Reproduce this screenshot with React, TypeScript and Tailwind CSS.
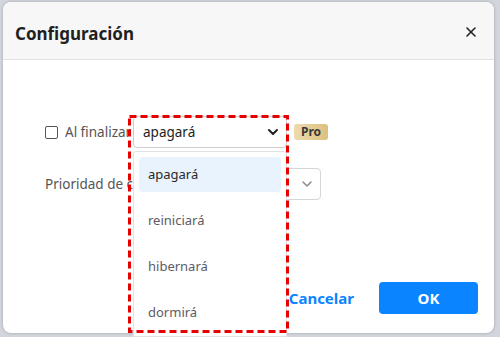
import { ChevronDown, X } from "lucide-react";

const FONT = "font-['Noto_Sans',_'Liberation_Sans',_sans-serif]";

const OPTIONS = ["apagará", "reiniciará", "hibernará", "dormirá"];

const Dropdown = () => (
    <div className="absolute left-0 top-[35px] z-10 w-[154px] h-[186px] bg-white border border-[#e2e2e2] rounded-t-[3px] px-[5px] pt-[5px] flex flex-col gap-[11px]">
        {OPTIONS.map((opt, i) => (
            <div
                key={`opt_${i}`}
                className={`h-[35px] shrink-0 flex items-center px-[9px] rounded-[4px] text-[13px] ${i === 0 ? "bg-[#e8f3fe] text-[#2a2a2a]" : "text-[#5c5c63]"}`}
            >
                {opt}
            </div>
        ))}
    </div>
);

export default function App() {
    return (
        <div className={`w-[500px] h-[337px] bg-[#d2d5db] pt-[2px] pl-[3px] ${FONT}`}>
            <div className="w-[491px] h-[331px] bg-white rounded-[8px] shadow-[0_0_3px_rgba(0,0,0,0.25)] flex flex-col">
                {/* header */}
                <div className="h-[58px] shrink-0 bg-[#f7f7f7] border-b border-[#e3e3e3] rounded-t-[8px] flex items-center justify-between pl-[12px] pr-[15px]">
                    <div className="text-[17px] font-bold text-[#1f1f1f] pt-[6px]">Configuración</div>
                    <X size={16} strokeWidth={2.4} className="text-[#222] mt-[3px]" />
                </div>

                {/* body */}
                <div className="relative flex flex-col pl-[42px] pr-[16px] pt-[56px]">
                    <div className="flex items-center h-[32px]">
                        <div className="w-[13px] h-[13px] border border-[#555] rounded-[2px] shrink-0" />
                        <div className="ml-[7px] w-[68px] overflow-hidden whitespace-nowrap text-[13.5px] text-[#555]">Al finalizar la tarea</div>
                        <div className="relative w-[154px] h-[32px]">
                            <div className="w-full h-full border border-[#cfcfcf] rounded-[4px] bg-white flex items-center justify-between pl-[9px] pr-[5px] text-[13.5px] text-[#222]">
                                apagará
                                <ChevronDown size={16} strokeWidth={3} className="text-[#222]" />
                            </div>
                            <Dropdown />
                        </div>
                        <div className="ml-[7px] h-[16px] px-[7px] rounded-[3px] bg-gradient-to-r from-[#eddcae] to-[#dcc07e] flex items-center text-[12px] font-bold text-[#3a3a3a]">Pro</div>
                    </div>

                    <div className="flex items-center h-[32px] mt-[20px]">
                        <div className="w-[88px] whitespace-nowrap text-[13.5px] text-[#555]">Prioridad de cálculo</div>
                        <div className="w-[188px] h-[32px] border border-[#d6d6d6] rounded-[4px] bg-white flex items-center justify-end pr-[5px]">
                            <ChevronDown size={16} strokeWidth={2.2} className="text-[#8a8a8a]" />
                        </div>
                    </div>

                    <div className="flex items-center justify-end h-[32px] mt-[82px]">
                        <div className="text-[15px] font-bold text-[#0a84ff] mr-[25px]">Cancelar</div>
                        <div className="w-[99px] h-[32px] rounded-[4px] bg-[#0a84ff] flex items-center justify-center text-[15px] font-bold text-white">OK</div>
                    </div>

                    {/* annotation */}
                    <svg className="absolute left-[125px] top-[55px] z-20 pointer-events-none" width="161" height="218">
                        <rect x="1.5" y="1.5" width="158" height="215" fill="none" stroke="#e60000" strokeWidth="3" strokeDasharray="7 4" />
                    </svg>
                </div>
            </div>
        </div>
    );
}
